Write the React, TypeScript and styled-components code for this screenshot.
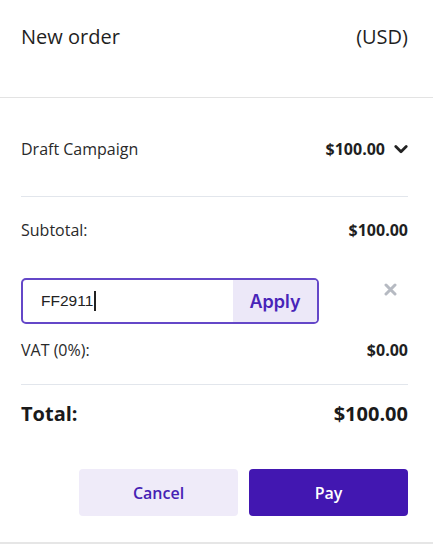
import React from "react";
import styled, { createGlobalStyle } from "styled-components";

const Global = createGlobalStyle`
  html, body { margin: 0; padding: 0; background: #fff; }
  body { font-family: "Open Sans", "Noto Sans", sans-serif; color: #222; }
  * { box-sizing: border-box; }
`;

const Modal = styled.div`
  width: 433px;
  height: 544px;
  display: flex;
  flex-direction: column;
  border-bottom: 2px solid #e6e6e6;
`;

const Header = styled.header`
  height: 98px;
  padding: 24px 25px 0 21px;
  display: flex;
  justify-content: space-between;
  align-items: flex-start;
  border-bottom: 1px solid #e3e3e3;
  font-size: 20px;
  line-height: 26px;
  color: #1f1f1f;
`;

const Body = styled.div`
  padding: 0 25px 0 21px;
  display: flex;
  flex-direction: column;
`;

const Row = styled.div<{ $pt: number; $pb: number; $divider?: boolean }>`
  display: flex;
  justify-content: space-between;
  align-items: center;
  padding-top: ${(p) => p.$pt}px;
  padding-bottom: ${(p) => p.$pb}px;
  border-bottom: ${(p) => (p.$divider ? "1px solid #e2e6ec" : "none")};
  font-size: 16px;
  line-height: 24px;
  color: #2a2a2a;
`;

const Amount = styled.span`
  font-weight: 700;
  color: #1f1f1f;
  display: inline-flex;
  align-items: center;
  gap: 9px;
`;

const TotalRow = styled.div`
  display: flex;
  justify-content: space-between;
  align-items: center;
  padding-top: 15px;
  font-size: 20px;
  line-height: 28px;
  font-weight: 700;
  color: #1a1a1a;
`;

const CouponRow = styled.div`
  display: flex;
  align-items: flex-start;
  margin-top: 36px;
`;

const CouponBox = styled.div`
  width: 298px;
  height: 46px;
  border: 2px solid #6447c8;
  border-radius: 5px;
  display: flex;
  overflow: hidden;
`;

const CouponInput = styled.div`
  flex: 1;
  display: flex;
  align-items: center;
  padding-left: 18px;
  font-family: "Liberation Sans", Arial, sans-serif;
  font-size: 15.5px;
  color: #222;
`;

const Caret = styled.span`
  display: inline-block;
  width: 1.5px;
  height: 20px;
  background: #222;
  margin-left: 1px;
`;

const ApplyButton = styled.button`
  width: 84px;
  border: none;
  background: #ece8f8;
  color: #4824b8;
  font-family: "Inter", sans-serif;
  font-weight: 600;
  font-size: 18px;
  padding: 0;
`;

const ClearButton = styled.button`
  margin-left: 64px;
  margin-top: 4px;
  width: 15px;
  height: 15px;
  border: none;
  background: none;
  padding: 0;
  display: flex;
  align-items: center;
  justify-content: center;
`;

const Actions = styled.div`
  display: flex;
  justify-content: flex-end;
  gap: 11px;
  padding: 41px 25px 0 21px;
`;

const Button = styled.button<{ $primary?: boolean }>`
  width: 159px;
  height: 47px;
  border: none;
  border-radius: 4px;
  font-family: "Open Sans", sans-serif;
  font-weight: 600;
  font-size: 16px;
  background: ${(p) => (p.$primary ? "#4217b1" : "#efebf9")};
  color: ${(p) => (p.$primary ? "#ffffff" : "#4621b4")};
`;

export default function App() {
  return (
    <>
      <Global />
      <Modal>
        <Header>
          <span>New order</span>
          <span>(USD)</span>
        </Header>
        <Body>
          <Row $pt={39} $pb={35} $divider>
            <span>Draft Campaign</span>
            <Amount>
              $100.00
              <svg width="14" height="9" viewBox="0 0 14 9">
                <path d="M1.8 1.6 L7 6.8 L12.2 1.6" fill="none" stroke="#222" strokeWidth="2.8" strokeLinecap="round" strokeLinejoin="round" />
              </svg>
            </Amount>
          </Row>
          <Row $pt={21} $pb={0}>
            <span>Subtotal:</span>
            <Amount>$100.00</Amount>
          </Row>
          <CouponRow>
            <CouponBox>
              <CouponInput>
                FF2911
                <Caret />
              </CouponInput>
              <ApplyButton>Apply</ApplyButton>
            </CouponBox>
            <ClearButton aria-label="Remove">
              <svg width="13" height="13" viewBox="0 0 13 13">
                <path d="M2 2 L11 11 M11 2 L2 11" stroke="#b6bac2" strokeWidth="3" strokeLinecap="round" />
              </svg>
            </ClearButton>
          </CouponRow>
          <Row $pt={14} $pb={22} $divider>
            <span>VAT (0%):</span>
            <Amount>$0.00</Amount>
          </Row>
          <TotalRow>
            <span>Total:</span>
            <span>$100.00</span>
          </TotalRow>
        </Body>
        <Actions>
          <Button>Cancel</Button>
          <Button $primary>Pay</Button>
        </Actions>
      </Modal>
    </>
  );
}
